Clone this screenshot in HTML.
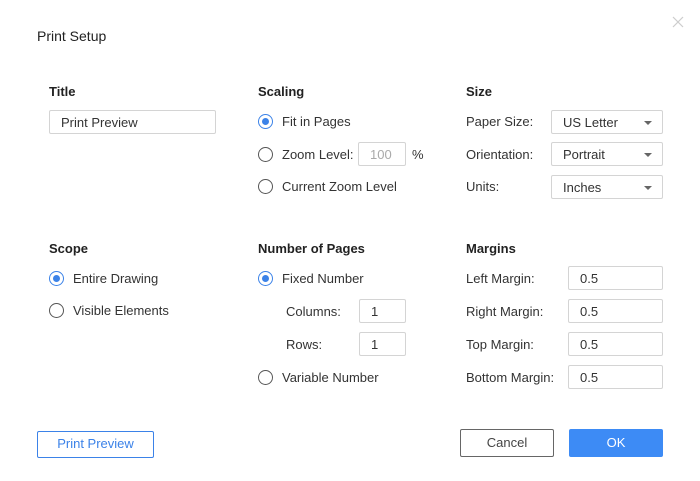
<!DOCTYPE html>
<html><head><style>
*{margin:0;padding:0;box-sizing:border-box}
body{width:700px;height:481px;background:#fff;font-family:"Liberation Sans",sans-serif;color:#333;font-size:13px;position:relative;overflow:hidden}
.a{position:absolute;white-space:nowrap;line-height:16px}
.h{font-weight:bold;color:#222}
.box{position:absolute;border:1px solid #d4d4d4;border-radius:2px;background:#fff;padding-left:11px;line-height:23px;font-size:13px}
.r{position:absolute;width:15px;height:15px;border:1.5px solid #555;border-radius:50%}
.r.on{border-color:#3b82e8}
.r.on:after{content:"";position:absolute;left:2.5px;top:2.5px;width:7px;height:7px;border-radius:50%;background:#3b82e8}
.car{position:absolute;right:10px;top:10px;width:0;height:0;border-left:4px solid transparent;border-right:4px solid transparent;border-top:4px solid #666}
.btn{position:absolute;text-align:center;font-size:13px;border-radius:2px}
</style></head><body>
<div class="a" style="left:37px;top:28px;font-size:14px;color:#222">Print Setup</div>
<svg style="position:absolute;left:672px;top:16px" width="12" height="12"><path d="M1 1L11 11M11 1L1 11" stroke="#ccc" stroke-width="1.2"/></svg>

<div class="a h" style="left:49px;top:84px">Title</div>
<div class="box" style="left:49px;top:110px;width:167px;height:24px">Print Preview</div>

<div class="a h" style="left:258px;top:84px">Scaling</div>
<div class="r on" style="left:258px;top:114px"></div><div class="a" style="left:282px;top:114px">Fit in Pages</div>
<div class="r" style="left:258px;top:147px"></div><div class="a" style="left:282px;top:147px">Zoom Level:</div>
<div class="box" style="left:358px;top:142px;width:48px;height:24px;color:#aaa">100</div>
<div class="a" style="left:412px;top:147px">%</div>
<div class="r" style="left:258px;top:179px"></div><div class="a" style="left:282px;top:179px">Current Zoom Level</div>

<div class="a h" style="left:466px;top:84px">Size</div>
<div class="a" style="left:466px;top:114px">Paper Size:</div>
<div class="box" style="left:551px;top:110px;width:112px;height:24px">US Letter<span class="car"></span></div>
<div class="a" style="left:466px;top:147px">Orientation:</div>
<div class="box" style="left:551px;top:142px;width:112px;height:24px">Portrait<span class="car"></span></div>
<div class="a" style="left:466px;top:179px">Units:</div>
<div class="box" style="left:551px;top:175px;width:112px;height:24px">Inches<span class="car"></span></div>

<div class="a h" style="left:49px;top:241px">Scope</div>
<div class="r on" style="left:49px;top:271px"></div><div class="a" style="left:73px;top:271px">Entire Drawing</div>
<div class="r" style="left:49px;top:303px"></div><div class="a" style="left:73px;top:303px">Visible Elements</div>

<div class="a h" style="left:258px;top:241px">Number of Pages</div>
<div class="r on" style="left:258px;top:271px"></div><div class="a" style="left:282px;top:271px">Fixed Number</div>
<div class="a" style="left:286px;top:304px">Columns:</div>
<div class="box" style="left:359px;top:299px;width:47px;height:24px">1</div>
<div class="a" style="left:286px;top:337px">Rows:</div>
<div class="box" style="left:359px;top:332px;width:47px;height:24px">1</div>
<div class="r" style="left:258px;top:370px"></div><div class="a" style="left:282px;top:370px">Variable Number</div>

<div class="a h" style="left:466px;top:241px">Margins</div>
<div class="a" style="left:466px;top:271px">Left Margin:</div>
<div class="box" style="left:568px;top:266px;width:95px;height:24px">0.5</div>
<div class="a" style="left:466px;top:304px">Right Margin:</div>
<div class="box" style="left:568px;top:299px;width:95px;height:24px">0.5</div>
<div class="a" style="left:466px;top:337px">Top Margin:</div>
<div class="box" style="left:568px;top:332px;width:95px;height:24px">0.5</div>
<div class="a" style="left:466px;top:370px">Bottom Margin:</div>
<div class="box" style="left:568px;top:365px;width:95px;height:24px">0.5</div>

<div class="btn" style="left:37px;top:431px;width:117px;height:27px;border:1.5px solid #3b82e8;color:#3b82e8;line-height:24px">Print Preview</div>
<div class="btn" style="left:460px;top:429px;width:94px;height:28px;border:1.5px solid #666;color:#444;line-height:25px">Cancel</div>
<div class="btn" style="left:569px;top:429px;width:94px;height:28px;background:#3d8bf5;color:#fff;line-height:28px">OK</div>
</body></html>
